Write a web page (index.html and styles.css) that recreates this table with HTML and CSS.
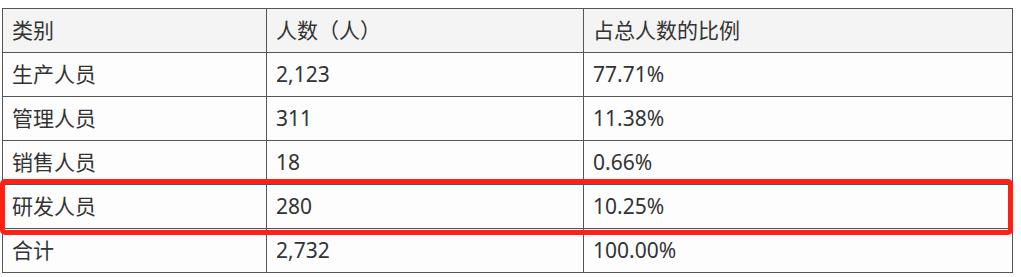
FILE: index.html
```html
<!DOCTYPE html>
<html lang="zh-CN">
<head>
<meta charset="utf-8">
<title>人员构成</title>
<link rel="stylesheet" href="styles.css">
</head>
<body>
<div class="wrap">
  <table class="staff">
    <colgroup>
      <col class="c1">
      <col class="c2">
      <col class="c3">
    </colgroup>
    <thead>
      <tr><th>类别</th><th>人数（人）</th><th>占总人数的比例</th></tr>
    </thead>
    <tbody>
      <tr><td>生产人员</td><td>2,123</td><td>77.71%</td></tr>
      <tr><td>管理人员</td><td>311</td><td>11.38%</td></tr>
      <tr><td>销售人员</td><td>18</td><td>0.66%</td></tr>
      <tr><td>研发人员</td><td>280</td><td>10.25%</td></tr>
      <tr><td>合计</td><td>2,732</td><td>100.00%</td></tr>
    </tbody>
  </table>
  <div class="highlight"></div>
</div>
</body>
</html>
```

FILE: styles.css
```css
html, body {
  margin: 0;
  padding: 0;
  background: #ffffff;
}

.wrap {
  position: relative;
  padding: 8px 0 0 2px;
}

.staff {
  border-collapse: collapse;
  table-layout: fixed;
  width: 1010px;
  background: #fdfdfd;
  font-family: "Noto Sans", "Noto Sans CJK SC", sans-serif;
  font-size: 21px;
  color: #333333;
}

.staff .c1 { width: 264px; }
.staff .c2 { width: 317px; }
.staff .c3 { width: 429px; }

.staff th,
.staff td {
  border: 1px solid #555555;
  padding: 0 9px;
  line-height: 43px;
  height: 43px;
  text-align: left;
  font-weight: normal;
  white-space: nowrap;
}

.staff thead th {
  background: #f4f4f4;
}

.highlight {
  position: absolute;
  left: 0;
  top: 179px;
  width: 1013px;
  height: 56px;
  box-sizing: border-box;
  border: 5px solid #ff2014;
  border-radius: 5px;
  pointer-events: none;
}
```
